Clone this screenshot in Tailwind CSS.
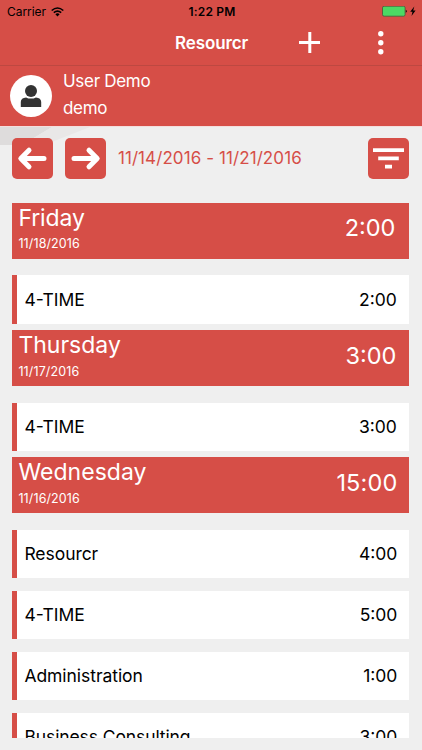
<!DOCTYPE html>
<html lang="en">
<head>
<meta charset="utf-8">
<title>Resourcr</title>
<script src="https://cdn.jsdelivr.net/npm/@tailwindcss/browser@4"></script>
</head>
<body class="w-[422px] h-[750px] overflow-hidden bg-[#efefef] font-['Inter','Liberation_Sans',sans-serif] text-black">
<header class="bg-[#d64e47] h-[66px] border-b border-[#bd4841]">
  <div class="h-[22px] pt-px pl-[7px] pr-[5px] grid grid-cols-3 items-center text-[12px]">
    <div class="flex items-center gap-[5px] leading-none"><span class="tracking-[-0.05px]">Carrier</span>
      <svg class="w-[13px] h-[10px]" viewBox="0 0 13 10" fill="none" stroke="#000" stroke-width="1.6"><path d="M.7 3.5Q6.5-1.5 12.3 3.5M2.8 5.7Q6.5 2.6 10.2 5.7"/><path d="M4.4 7.2Q6.5 5.4 8.6 7.2L6.5 9.5Z" fill="#000" stroke="none"/></svg>
    </div>
    <div class="text-center font-semibold leading-none whitespace-nowrap tracking-[0.2px]">1:22 PM</div>
    <div class="flex items-center justify-end">
      <svg class="w-[35px] h-[12px]" viewBox="0 0 35 12"><rect x=".5" y=".2" width="22.6" height="10" rx="1.6" fill="#4cd964" stroke="#47553a" stroke-width=".8"/><path d="M23.8 3.7q2.1 1.5 0 3z"/><path d="M32.3.4 28.2 5.8h2.3l-1 4.3 4.1-5.5h-2.4z"/></svg>
    </div>
  </div>
  <div class="h-[43px] flex items-center pl-[175px] text-white">
    <h1 class="w-[123px] text-[17px] font-semibold leading-none tracking-[-0.1px]">Resourcr</h1>
    <svg class="w-[23px] h-[23px]" viewBox="0 0 23 23" fill="none" stroke="#fff" stroke-width="3"><path d="M1 10.5h21M11.8 0v21"/></svg>
    <svg class="w-[6px] h-[24px] ml-[57px] overflow-visible" viewBox="0 0 6 24" fill="#fff"><circle cx="2.8" cy="1.7" r="2.7"/><circle cx="2.8" cy="10.7" r="2.7"/><circle cx="2.8" cy="19.7" r="2.7"/></svg>
  </div>
</header>
<section class="h-[60px] bg-[#d64e47] flex pl-[10px] text-white">
  <div class="size-[42px] mt-[9px] rounded-full bg-white flex items-center justify-center">
    <svg class="size-[22px]" viewBox="0 0 22 22" fill="#333"><circle cx="11" cy="6" r="6"/><path d="M.8 22v-5c0-2.7 2-4.4 5.3-4.6 2.6 1.6 7.2 1.6 9.8 0 3.3.2 5.3 1.9 5.3 4.6v5z"/></svg>
  </div>
  <div class="pl-[11px] pt-[2px] text-[17px] leading-[27px] tracking-[-0.3px]"><p>User Demo</p><p>demo</p></div>
</section>
<main class="relative h-[612px] overflow-hidden pl-[12.4px] pr-[12.6px] pt-[12px]">
  <div class="absolute inset-x-0 top-0 h-px bg-[#f3dedd]"></div>
  <svg class="absolute left-0 top-px w-[100px] h-[19px]" viewBox="0 0 100 19"><path d="M0 0H52L22 18H0z" fill="#dedcdc"/><path d="M52 0H90L44 18H22z" fill="#e9e7e7"/></svg>
  <nav class="relative flex items-center h-[41px] mb-[24px]">
    <button class="size-[41px] rounded-[5px] bg-[#d64e47] flex items-center justify-center"><svg class="size-[31px]" viewBox="0 0 31 31" fill="none" stroke="#fff" stroke-width="5" stroke-linecap="round" stroke-linejoin="round"><path d="M27 15.5H5M12 7.2 3.8 15.5 12 23.8"/></svg></button>
    <button class="size-[41px] ml-[12px] rounded-[5px] bg-[#d64e47] flex items-center justify-center"><svg class="size-[31px]" viewBox="0 0 31 31" fill="none" stroke="#fff" stroke-width="5" stroke-linecap="round" stroke-linejoin="round"><path d="M4 15.5h22M19 7.2l8.2 8.3L19 23.8"/></svg></button>
    <span class="ml-[11.5px] pb-px text-[17px] leading-[24px] tracking-[0.09px] text-[#d64e47] whitespace-nowrap">11/14/2016 - 11/21/2016</span>
    <button class="ml-auto size-[41px] rounded-[5px] bg-[#d64e47]"><svg class="size-[41px]" viewBox="0 0 41 41" fill="#fff"><path d="M5 10.2h31v3.8H5zM10.2 18.6h20.6v3.6H10.2zM17 26.8h7v3.6h-7z"/></svg></button>
  </nav>
  <section>
    <div class="h-[56px] mb-[16.4px] bg-[#d64e47] text-white flex justify-between pl-[6px] pr-[14px]">
      <div><h2 class="pt-px text-[23px] leading-[28px] tracking-[-0.1px]">Friday</h2><p class="mt-[5px] text-[12.5px] leading-[14px] tracking-[0.12px]">11/18/2016</p></div><span class="text-[23.5px] leading-[50px]">2:00</span></div>
    <div class="h-[48.6px] mb-[6.2px] bg-white border-l-[5px] border-[#d64e47] flex items-center justify-between pl-[7px] pr-[12.5px] text-[17.5px]"><span>4-TIME</span><span>2:00</span></div>
  </section>
  <section>
    <div class="h-[56px] mb-[16.4px] bg-[#d64e47] text-white flex justify-between pl-[6px] pr-[13px]">
      <div><h2 class="pt-px text-[23px] leading-[28px]">Thursday</h2><p class="mt-[5.5px] text-[12.5px] leading-[14px] tracking-[0.12px]">11/17/2016</p></div><span class="pt-[0.5px] text-[23.5px] leading-[50px]">3:00</span></div>
    <div class="h-[48.6px] mb-[6.2px] bg-white border-l-[5px] border-[#d64e47] flex items-center justify-between pl-[7px] pr-[12.5px] text-[17.5px]"><span>4-TIME</span><span>3:00</span></div>
  </section>
  <section>
    <div class="h-[56px] mb-[16.4px] bg-[#d64e47] text-white flex justify-between pl-[6px] pr-[12px]">
      <div><h2 class="pt-px text-[23px] leading-[28px] tracking-[0.05px]">Wednesday</h2><p class="mt-[5.5px] text-[12.5px] leading-[14px] tracking-[0.12px]">11/16/2016</p></div><span class="pt-[0.8px] text-[23.5px] leading-[50px] tracking-[0.15px]">15:00</span></div>
    <div class="flex flex-col gap-[12.4px] text-[17.5px]">
      <div class="h-[48.6px] bg-white border-l-[5px] border-[#d64e47] flex items-center justify-between pl-[7px] pr-[12px]"><span class="tracking-[-0.05px]">Resourcr</span><span>4:00</span></div>
      <div class="h-[48.6px] bg-white border-l-[5px] border-[#d64e47] flex items-center justify-between pl-[7px] pr-[12px]"><span>4-TIME</span><span>5:00</span></div>
      <div class="h-[48.6px] bg-white border-l-[5px] border-[#d64e47] flex items-center justify-between pl-[7px] pr-[12px]"><span class="tracking-[-0.05px]">Administration</span><span>1:00</span></div>
      <div class="h-[48.6px] bg-white border-l-[5px] border-[#d64e47] flex items-center justify-between pl-[7px] pr-[12px]"><span class="tracking-[-0.1px]">Business Consulting</span><span>3:00</span></div>
    </div>
  </section>
</main>
</body>
</html>
